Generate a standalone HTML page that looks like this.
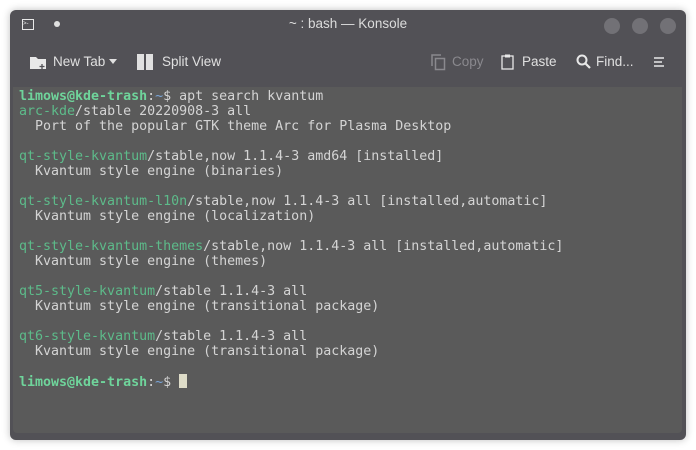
<!DOCTYPE html>
<html><head><style>
body{margin:0;width:696px;height:450px;background:#fff;position:relative;overflow:hidden;font-family:"Liberation Sans",sans-serif}
.win{position:absolute;left:10px;top:10px;width:676px;height:430px;background:#525156;border-radius:6px;box-shadow:0 0 8px rgba(0,0,0,.25)}
.title{position:absolute;top:16px;left:0;width:676px;text-align:center;color:#dcdcdc;font-size:13.5px}
.dot{position:absolute;top:8px;width:16px;height:16px;border-radius:50%;background:#727176}
.tb{position:absolute;top:44px;color:#e0e0e0;font-size:13.5px}
.term{position:absolute;left:3px;top:77px;width:669px;height:346px;background:#5a5a5a;border-radius:0 0 4px 4px}
pre{margin:0;position:absolute;left:6px;top:2px;font-family:"DejaVu Sans Mono","Liberation Mono",monospace;font-size:13.3px;line-height:15px;color:#d4d4d4}
.g{color:#5dbb8a}.b{color:#6fd49b;font-weight:bold}.t{color:#7aa6da}
.cur{display:inline-block;width:8px;height:14px;background:#dedcc8;vertical-align:-2px}
</style></head><body>
<div class="win">
<div style="position:absolute;left:12px;top:9px;width:10px;height:9px;border:1px solid #e8e8e8;font-size:6px;color:#e8e8e8;line-height:9px">&gt;-</div>
<div style="position:absolute;left:44px;top:11px;width:6px;height:6px;border-radius:50%;background:#e0e0e0"></div>
<div class="title" style="top:6px">~ : bash — Konsole</div>
<div class="dot" style="left:594px"></div><div class="dot" style="left:622px"></div><div class="dot" style="left:650px"></div>
<svg style="position:absolute;left:20px;top:44px" width="18" height="16"><path d="M0 3h6l2 2h8v10H0z" fill="#e8e8e8"/><path d="M12 10v5M9.5 12.5h5" stroke="#525156" stroke-width="1.3"/></svg>
<div class="tb" style="left:43px">New Tab</div>
<svg style="position:absolute;left:99px;top:49px" width="8" height="6"><path d="M0 0h8L4 5z" fill="#e0e0e0"/></svg>
<div style="position:absolute;left:127px;top:44px;width:7px;height:16px;background:#e0e0e0"></div>
<div style="position:absolute;left:136px;top:44px;width:7px;height:16px;background:#e0e0e0"></div>
<div class="tb" style="left:152px">Split View</div>
<svg style="position:absolute;left:421px;top:44px" width="16" height="17"><path d="M1 12V1h9" fill="none" stroke="#8a898e" stroke-width="1.5"/><rect x="4.5" y="4.5" width="9" height="11" fill="none" stroke="#8a898e" stroke-width="1.5"/></svg>
<div class="tb" style="left:442px;color:#8a898e">Copy</div>
<svg style="position:absolute;left:491px;top:44px" width="14" height="16"><rect x="1" y="2" width="11" height="13" fill="none" stroke="#e8e8e8" stroke-width="1.3"/><rect x="4" y="0.5" width="5" height="3" fill="#e8e8e8"/></svg>
<div class="tb" style="left:512px">Paste</div>
<svg style="position:absolute;left:566px;top:44px" width="16" height="16"><circle cx="6" cy="6" r="4.5" fill="none" stroke="#e8e8e8" stroke-width="2"/><path d="M9 9l5 5" stroke="#e8e8e8" stroke-width="2.2"/></svg>
<div class="tb" style="left:586px">Find...</div>
<svg style="position:absolute;left:644px;top:47px" width="12" height="10"><path d="M0 1h10M0 5h8M0 9h10" stroke="#e8e8e8" stroke-width="1.4"/></svg>
<div class="term"><pre><span class="b">limows@kde-trash</span>:<span class="t">~</span>$ apt search kvantum
<span class="g">arc-kde</span>/stable 20220908-3 all
  Port of the popular GTK theme Arc for Plasma Desktop

<span class="g">qt-style-kvantum</span>/stable,now 1.1.4-3 amd64 [installed]
  Kvantum style engine (binaries)

<span class="g">qt-style-kvantum-l10n</span>/stable,now 1.1.4-3 all [installed,automatic]
  Kvantum style engine (localization)

<span class="g">qt-style-kvantum-themes</span>/stable,now 1.1.4-3 all [installed,automatic]
  Kvantum style engine (themes)

<span class="g">qt5-style-kvantum</span>/stable 1.1.4-3 all
  Kvantum style engine (transitional package)

<span class="g">qt6-style-kvantum</span>/stable 1.1.4-3 all
  Kvantum style engine (transitional package)

<span class="b">limows@kde-trash</span>:<span class="t">~</span>$ <span class="cur"></span></pre></div>
</div>
</body></html>
